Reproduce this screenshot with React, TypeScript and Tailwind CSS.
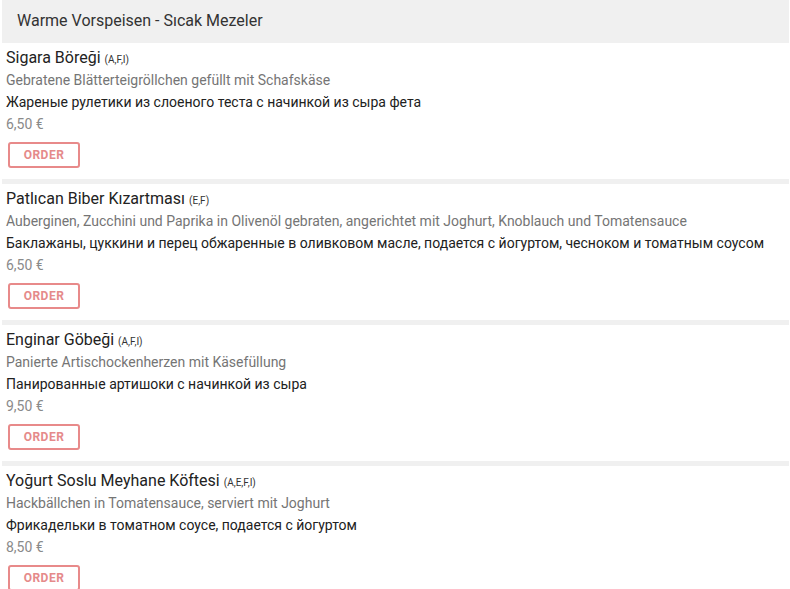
const items = [
  {
    name: 'Sigara Böreği',
    allergens: '(A,F,I)',
    de: 'Gebratene Blätterteigröllchen gefüllt mit Schafskäse',
    ru: 'Жареные рулетики из слоеного теста с начинкой из сыра фета',
    price: '6,50 €',
  },
  {
    name: 'Patlıcan Biber Kızartması',
    allergens: '(E,F)',
    de: 'Auberginen, Zucchini und Paprika in Olivenöl gebraten, angerichtet mit Joghurt, Knoblauch und Tomatensauce',
    ru: 'Баклажаны, цуккини и перец обжаренные в оливковом масле, подается с йогуртом, чесноком и томатным соусом',
    price: '6,50 €',
  },
  {
    name: 'Enginar Göbeği',
    allergens: '(A,F,I)',
    de: 'Panierte Artischockenherzen mit Käsefüllung',
    ru: 'Панированные артишоки с начинкой из сыра',
    price: '9,50 €',
  },
  {
    name: 'Yoğurt Soslu Meyhane Köftesi',
    allergens: '(A,E,F,I)',
    de: 'Hackbällchen in Tomatensauce, serviert mit Joghurt',
    ru: 'Фрикадельки в томатном соусе, подается с йогуртом',
    price: '8,50 €',
  },
];

export default function App() {
  return (
    <div className="min-h-screen bg-white pl-[2px] pr-[1px] font-['Roboto',sans-serif]">
      {/* Category header */}
      <div className="h-[43px] bg-[#f0f0f0] pl-[15px] flex items-center">
        <h2 className="text-[16px] text-[#333] -mt-[1px]">Warme Vorspeisen - Sıcak Mezeler</h2>
      </div>

      <div className="flex flex-col">
        {items.map((item, i) => (
          <div
            key={item.name}
            className={`pl-[4px] pt-[4px] pb-[11px] ${i < items.length - 1 ? 'border-b-[5px] border-[#f0f0f0]' : ''}`}
          >
            <div className="h-[22px] flex items-center text-[16px] text-[#222] leading-none">
              <span>{item.name}</span>
              <span className="ml-[4px] text-[10px] text-[#333] mt-[3px]">{item.allergens}</span>
            </div>
            <p className="h-[22px] flex items-center text-[14px] text-[#757575]">{item.de}</p>
            <p className="h-[22px] flex items-center text-[14px] text-[#212121]">{item.ru}</p>
            <p className="h-[23px] flex items-center text-[14px] text-[#8a8a8a]">{item.price}</p>
            <button className="mt-[6px] ml-[2px] w-[72px] h-[26px] border-2 border-[#e88a8a] rounded-[3px] text-[12px] font-bold tracking-[0.5px] text-[#e58a8a] flex items-center justify-center">
              ORDER
            </button>
          </div>
        ))}
      </div>
    </div>
  );
}
